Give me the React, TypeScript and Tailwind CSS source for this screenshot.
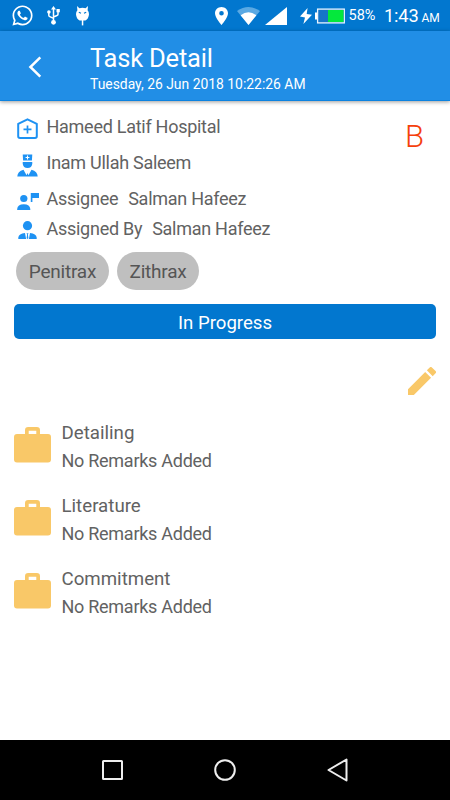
import React from "react";
import { FaWhatsapp } from "react-icons/fa";

function StatusBar() {
  return (
    <div className="flex h-[31px] items-center bg-[#0277cf] pl-[11px] text-white">
      <FaWhatsapp className="h-[23px] w-[23px] shrink-0" />
      <svg className="ml-[13px] h-[19px] w-[13px] shrink-0" viewBox="0 0 13 19" fill="#fff" stroke="#fff">
        <path d="M6.5 16V3M1.8 6v3.2q0 1 1 1.4L6.5 12.4M11 5v3.2q0 1-1 1.3L6.5 11" fill="none" strokeWidth="1.5" />
        <path d="M6.5 0L9 3.6H4Z" stroke="none" />
        <circle cx="1.9" cy="6" r="1.8" stroke="none" />
        <rect x="9.5" y="3" width="3.3" height="3.3" stroke="none" />
        <circle cx="6.5" cy="16.3" r="2.4" stroke="none" />
      </svg>
      <svg className="ml-[16px] h-[20px] w-[13px] shrink-0" viewBox="0 0 13 20" fill="#fff">
        <path d="M1 0L3.4 2.3Q6.5 1.2 9.6 2.3L12 0L11.6 4.2Q13 5.7 13 8.2Q12.6 13 9.4 14.4H3.6Q.4 13 0 8.2Q0 5.7 1.4 4.2Z" />
        <path d="M5.8 14h1.5v5.4H5.8Z" />
        <path d="M2.8 6.2l2.2 1M10.2 6.2L8 7.2" stroke="#0277cf" strokeWidth="1.1" />
      </svg>
      <svg className="ml-[126px] h-[18px] w-[13px] shrink-0" viewBox="5 2 14 20" preserveAspectRatio="none" fill="#fff">
        <path d="M12 2C8.13 2 5 5.13 5 9c0 5.25 7 13 7 13s7-7.75 7-13c0-3.87-3.13-7-7-7zm0 9.5a2.5 2.5 0 0 1 0-5 2.5 2.5 0 0 1 0 5z" />
      </svg>
      <svg className="ml-[9px] h-[18px] w-[23px] shrink-0" viewBox="0 0 23 18">
        <path d="M0 4Q11.5-4 23 4L11.5 18Z" fill="#5aa9e3" />
        <path d="M3.6 8.3Q11.5 2.2 19.4 8.3L11.5 18Z" fill="#fff" />
      </svg>
      <svg className="ml-[5px] h-[18px] w-[22px] shrink-0" viewBox="0 0 22 18">
        <path d="M22 0V18H0Z" fill="#fff" />
      </svg>
      <svg className="ml-[13px] h-[16px] w-[12px] shrink-0" viewBox="0 0 12 16" fill="#fff">
        <path d="M7.6 0L0 8.6L5 9.4L3.4 16L12 6.8L6.7 6Z" />
      </svg>
      <svg className="ml-[3px] h-[16px] w-[30px] shrink-0" viewBox="0 0 30 16">
        <path d="M0 4.5h2v7H0Z" fill="#fff" />
        <rect x="2.6" y="1.1" width="26.7" height="13.8" fill="#1675c8" stroke="#e8f4ff" strokeWidth="1.3" />
        <path d="M13 2h15.5v12H13Z" fill="#04e83c" />
      </svg>
      <span className="ml-[3.5px] w-[27.5px] text-[14.5px] leading-[20px] whitespace-nowrap">58%</span>
      <span className="ml-[8px] w-[36px] pt-px text-[18.3px] leading-[20px] tracking-[-0.2px] whitespace-nowrap">1:43</span>
      <span className="ml-[1.5px] pt-[5px] text-[12px] leading-[16px]">AM</span>
    </div>
  );
}

function Header() {
  return (
    <header className="flex h-[70px] items-start border-b border-[#0b82e0] bg-[#218ee6] text-white shadow-[0_1px_4px_rgba(0,0,0,0.4)]">
      <svg className="mt-[25px] ml-[28px] h-[22px] w-[14px] shrink-0" viewBox="0 0 14 22" fill="none" stroke="#fff" strokeWidth="2.5">
        <path d="M12.3 1.3L2.4 11L12.3 20.7" />
      </svg>
      <div className="ml-[48px] pt-[11px]">
        <h1 className="text-[25.5px] leading-[32px] tracking-[-0.2px]">Task Detail</h1>
        <p className="pt-px text-[13.9px] leading-[18px]">Tuesday, 26 Jun 2018 10:22:26 AM</p>
      </div>
    </header>
  );
}

function HospitalIcon() {
  return (
    <svg className="mt-[3px] h-[22px] w-[22px]" viewBox="0 0 22 22" fill="none" stroke="#1e92f3">
      <path d="M1.2 5.8L10.5 1.3L19.8 5.8V18.3Q19.8 20 18 20H3Q1.2 20 1.2 18.3Z" strokeWidth="2" strokeLinejoin="round" />
      <path d="M10.5 7.4v8M6.5 11.4h8" strokeWidth="1.7" />
    </svg>
  );
}

function DoctorIcon() {
  return (
    <svg className="mt-[3px] h-[23px] w-[21px]" viewBox="0 0 22 23" preserveAspectRatio="none" fill="#1e92f3">
      <path d="M6 .5H16L15.6 6.5H6.4Z" />
      <path d="M6 8h10v1.5Q15.6 14 11 14Q6.4 14 6 9.5Z" />
      <path d="M.3 22.5Q.5 17.5 6.8 15.7L10 21.3L11 19L12 21.3L15.2 15.7Q21.5 17.5 21.7 22.5Z" />
      <path d="M11 1.5v4M9 3.5h4" stroke="#fff" strokeWidth="1.1" />
    </svg>
  );
}

function AssigneeIcon() {
  return (
    <svg className="mt-[6px] h-[17px] w-[22px]" viewBox="0 0 23 18" preserveAspectRatio="none" fill="#1e92f3">
      <circle cx="7.1" cy="5.8" r="3.8" />
      <path d="M.2 18V17Q.5 11.8 7.1 11.8Q13.5 11.8 13.9 17V18Z" />
      <path d="M14.4 0H23v5.4h-6.9V9.4H14.4Z" />
    </svg>
  );
}

function AssignerIcon() {
  return (
    <svg className="mt-[4px] ml-px h-[18px] w-[20px]" viewBox="0 0 20 18" fill="#1e92f3">
      <circle cx="9.5" cy="4.7" r="4.6" />
      <path d="M.3 18V16.5Q.8 12.6 7 11.9L8.1 18ZM18.7 18V16.5Q18.2 12.6 12 11.9L10.9 18Z" />
      <path d="M8.5 12.2h2L9.9 13.6L10.4 17.3L9.5 18L8.6 17.3L9.1 13.6Z" />
    </svg>
  );
}

function Row({ icon, height, children }: { icon: React.ReactNode; height: string; children: React.ReactNode }) {
  return (
    <div className={`flex items-start ${height}`}>
      <div className="w-[29.5px] shrink-0">{icon}</div>
      <div className="flex text-[18px] leading-[24px] tracking-[-0.27px] whitespace-nowrap">{children}</div>
    </div>
  );
}

function Chip({ label, width }: { label: string; width: string }) {
  return (
    <span className={`flex h-[38px] items-center justify-center rounded-full bg-[#bfbfbf] pt-[3px] text-[19px] tracking-[-0.22px] text-[#555555] ${width}`}>
      {label}
    </span>
  );
}

function Remark({ title }: { title: string }) {
  return (
    <li className="flex h-[73px] items-start">
      <svg className="mt-[6px] h-[36px] w-[37px] shrink-0" viewBox="0 0 37 36" fill="#f9c868">
        <path fillRule="evenodd" d="M11 7V3.2Q11 0 14.2 0H22.8Q26 0 26 3.2V7H34Q37 7 37 10V32.5Q37 35.5 34 35.5H3Q0 35.5 0 32.5V10Q0 7 3 7ZM14.7 7H22.3V3.8H14.7Z" />
      </svg>
      <div className="ml-[10.5px] text-[18px] leading-[28px]">
        <h2 className="-mt-[2px] text-[18.7px]">{title}</h2>
        <p className="tracking-[-0.27px]">No Remarks Added</p>
      </div>
    </li>
  );
}

export default function App() {
  return (
    <div className="flex h-[800px] w-[450px] flex-col overflow-hidden bg-white font-[Roboto,sans-serif] text-[#626262]">
      <StatusBar />
      <Header />
      <main className="flex flex-1 flex-col">
        <div className="flex justify-between pt-[14px] pl-[17px]">
          <div>
            <Row height="h-[36px]" icon={<HospitalIcon />}>Hameed Latif Hospital</Row>
            <Row height="h-[36px]" icon={<DoctorIcon />}>Inam Ullah Saleem</Row>
            <Row height="h-[30px]" icon={<AssigneeIcon />}>
              <span className="mr-[10px]">Assignee</span>
              <span>Salman Hafeez</span>
            </Row>
            <Row height="h-[35px]" icon={<AssignerIcon />}>
              <span className="mr-[10px]">Assigned By</span>
              <span>Salman Hafeez</span>
            </Row>
          </div>
          <div className="mt-[4px] mr-[26px] text-[31px] leading-[36px] font-light text-[#f5400c]">B</div>
        </div>
        <div className="flex gap-[8px] pl-[16px]">
          <Chip label="Penitrax" width="w-[93px]" />
          <Chip label="Zithrax" width="w-[82px]" />
        </div>
        <button className="mx-[14px] mt-[14px] h-[35px] rounded-[5px] bg-[#0277cf] pt-[3px] text-[18.6px] leading-[32px] text-white">
          In Progress
        </button>
        <div className="flex justify-end pt-[28px] pr-[14px]">
          <svg className="h-[28px] w-[28px]" viewBox="3 3 18 18" fill="#f9c868">
            <path d="M3 17.25V21h3.75L17.81 9.94l-3.75-3.75L3 17.25zM20.71 7.04a1 1 0 0 0 0-1.41l-2.34-2.34a1 1 0 0 0-1.41 0l-1.83 1.83 3.75 3.75 1.83-1.83z" />
          </svg>
        </div>
        <ul className="mt-[26px] pl-[14px]">
          <Remark title="Detailing" />
          <Remark title="Literature" />
          <Remark title="Commitment" />
        </ul>
      </main>
      <nav className="flex h-[60px] items-center bg-black pl-[102px]">
        <svg className="h-[20px] w-[21px]" viewBox="0 0 21 20" fill="none" stroke="#eee" strokeWidth="2">
          <rect x="1" y="1" width="19" height="18" rx="0.5" />
        </svg>
        <svg className="ml-[91px] h-[22px] w-[22px]" viewBox="0 0 22 22" fill="none" stroke="#eee" strokeWidth="2">
          <circle cx="11" cy="11" r="9.8" />
        </svg>
        <svg className="ml-[91px] h-[24px] w-[21px]" viewBox="0 0 21 24" fill="none" stroke="#eee" strokeWidth="2" strokeLinejoin="round">
          <path d="M19.5 1.5V22.5L1.5 12Z" />
        </svg>
      </nav>
    </div>
  );
}
